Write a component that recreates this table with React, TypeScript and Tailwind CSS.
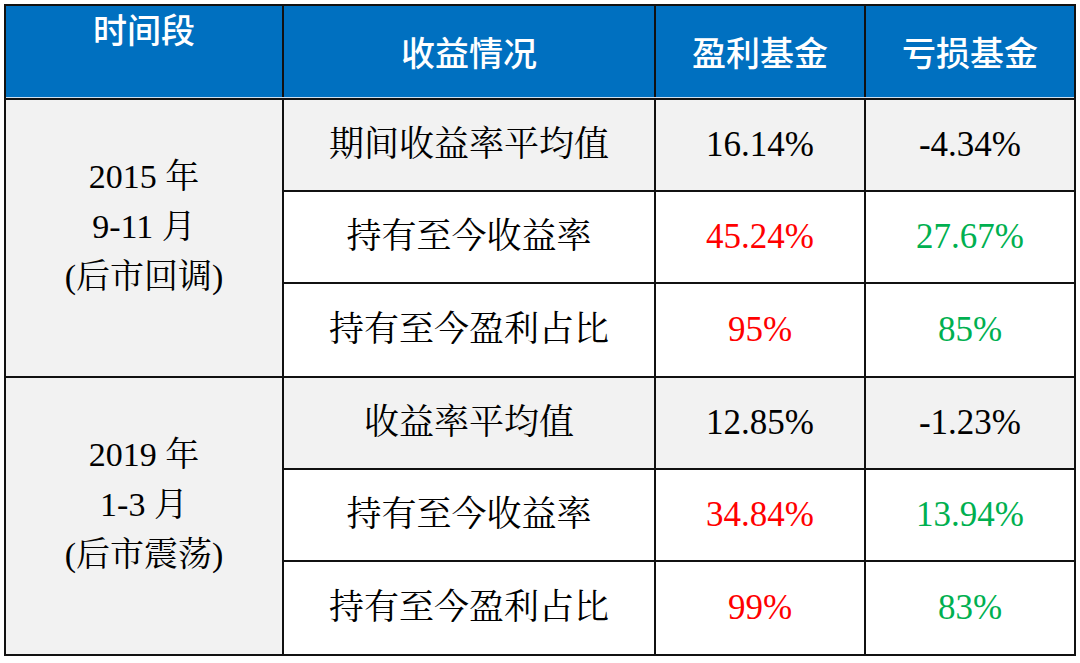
const serif = "[font-family:'Liberation_Serif','Noto_Serif_CJK_SC','Noto_Sans_CJK_SC',serif]";

type Row = { label: string; win: string; loss: string; colored: boolean };

const groups: { lines: string[]; rows: Row[] }[] = [
  {
    lines: ["2015 年", "9-11 月", "(后市回调)"],
    rows: [
      { label: "期间收益率平均值", win: "16.14%", loss: "-4.34%", colored: false },
      { label: "持有至今收益率", win: "45.24%", loss: "27.67%", colored: true },
      { label: "持有至今盈利占比", win: "95%", loss: "85%", colored: true },
    ],
  },
  {
    lines: ["2019 年", "1-3 月", "(后市震荡)"],
    rows: [
      { label: "收益率平均值", win: "12.85%", loss: "-1.23%", colored: false },
      { label: "持有至今收益率", win: "34.84%", loss: "13.94%", colored: true },
      { label: "持有至今盈利占比", win: "99%", loss: "83%", colored: true },
    ],
  },
];

function Group({ lines, rows, last }: { lines: string[]; rows: Row[]; last: boolean }) {
  return (
    <div className={`flex ${last ? "" : "border-b-2 border-[#111]"}`}>
      {/* period */}
      <div className="w-[278px] shrink-0 border-r-2 border-[#111] bg-[#f2f2f2] flex flex-col items-center justify-center pb-[22px] text-[34px] leading-[50px] text-black">
        {lines.map((l) => (
          <div key={l}>{l}</div>
        ))}
      </div>
      <div className="flex-1 flex flex-col">
        {rows.map((r, i) => (
          <div
            key={r.label}
            className={`flex h-[92px] ${i === 0 ? "bg-[#f2f2f2]" : "bg-white"} ${i < rows.length - 1 ? "border-b-2 border-[#111]" : ""}`}
          >
            <div className="w-[372px] shrink-0 border-r-2 border-[#111] flex items-center justify-center text-[35px] text-black">
              {r.label}
            </div>
            <div className={`w-[210px] shrink-0 border-r-2 border-[#111] flex items-center justify-center text-[35px] ${r.colored ? "text-[#ff0000]" : "text-black"}`}>
              {r.win}
            </div>
            <div className={`flex-1 flex items-center justify-center text-[35px] ${r.colored ? "text-[#00b050]" : "text-black"}`}>
              {r.loss}
            </div>
          </div>
        ))}
      </div>
    </div>
  );
}

export default function App() {
  return (
    <div className={`w-[1080px] h-[663px] bg-white pt-[4px] pl-[4px] ${serif}`}>
      <div className="w-[1072px] border-2 border-[#111] flex flex-col">
        {/* Header */}
        <div className="flex h-[91px] bg-[#0070c0] text-white text-[34px] font-medium [font-family:'Noto_Sans_CJK_SC',sans-serif]">
          <div className="w-[278px] shrink-0 border-r-2 border-[#111] flex justify-center pt-[6px] leading-[34px]">时间段</div>
          <div className="w-[372px] shrink-0 border-r-2 border-[#111] flex items-center justify-center">收益情况</div>
          <div className="w-[210px] shrink-0 border-r-2 border-[#111] flex items-center justify-center">盈利基金</div>
          <div className="flex-1 flex items-center justify-center">亏损基金</div>
        </div>
        <div className="h-[1px] bg-[#cfe0f0]" />
        <div className="h-[2px] bg-[#111]" />
        {groups.map((g, i) => (
          <Group key={g.lines[0]} lines={g.lines} rows={g.rows} last={i === groups.length - 1} />
        ))}
      </div>
    </div>
  );
}
